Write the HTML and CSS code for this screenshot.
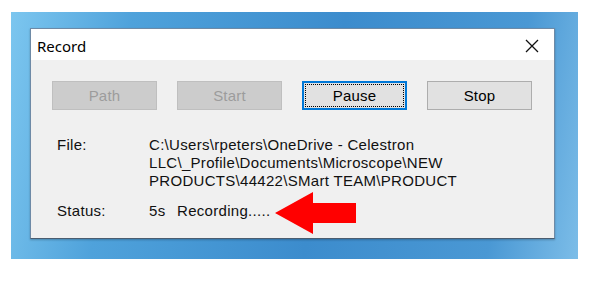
FILE: index.html
```html
<!DOCTYPE html>
<html>
<head>
<meta charset="utf-8">
<link rel="stylesheet" href="styles.css">
</head>
<body>
<div class="wrap">
  <div class="desk">
    <div class="dialog">
      <div class="titlebar">
        <span class="title">Record</span>
        <svg class="close" width="14" height="14" viewBox="0 0 14 14"><path d="M1 1L13 13M13 1L1 13" stroke="#111" stroke-width="1.3" fill="none"/></svg>
      </div>
      <div class="content">
        <div class="buttons">
          <div class="btn disabled">Path</div>
          <div class="btn disabled">Start</div>
          <div class="btn focus"><span class="focusring">Pause</span></div>
          <div class="btn">Stop</div>
        </div>
        <div class="row file-row">
          <div class="label">File:</div>
          <div class="value">
            <span class="line">C:\Users\rpeters\OneDrive - Celestron</span>
            <span class="line">LLC\_Profile\Documents\Microscope\NEW</span>
            <span class="line">PRODUCTS\44422\SMart TEAM\PRODUCT</span>
          </div>
        </div>
        <div class="row status-row">
          <div class="label">Status:</div>
          <div class="value"><span class="secs">5s</span><span>Recording.....</span></div>
        </div>
      </div>
      <svg class="arrow" width="84" height="44" viewBox="0 0 84 44"><polygon points="1,22 39,1 39,12 82,12 82,32 39,32 39,43" fill="#ff0000"/></svg>
    </div>
  </div>
</div>
</body>
</html>
```
FILE: styles.css
```css
html, body { margin: 0; padding: 0; background: #ffffff; }
.wrap { padding: 12px 0 0 11px; }
.desk {
  width: 567px; height: 247px; box-sizing: border-box;
  padding: 16px 0 0 19px;
  background: linear-gradient(100deg, #7cc6ef 0%, #4fa2db 20%, #3c8ccd 55%, #4a98d4 85%, #7cbde8 100%);
}
.dialog {
  position: relative;
  width: 525px; height: 211px; box-sizing: border-box;
  background: #f0f0f0;
  border: 1px solid #6e8aa6;
  border-bottom-color: #4b5d70;
  box-shadow: 0 1px 2px rgba(0,0,0,0.25);
  font-family: "Liberation Sans", Arial, sans-serif;
  color: #000;
}
.titlebar {
  height: 31px; background: #fff;
  display: flex; align-items: center; justify-content: space-between;
  padding: 0 15px 0 6px;
}
.title { font-family: "Noto Sans", "Open Sans", sans-serif; font-size: 15px; color: #000; padding-top: 2px; }
.close { margin-top: 3px; }
.content { padding: 21px 0 0 21px; }
.buttons { display: flex; gap: 20px; }
.btn {
  width: 105px; height: 29px; box-sizing: border-box;
  display: flex; align-items: center; justify-content: center;
  background: #e1e1e1; border: 1px solid #adadad;
  font-size: 15px; letter-spacing: 0.2px; color: #000;
}
.btn.disabled { background: #cccccc; border-color: #bfbfbf; color: #9c9c9c; }
.btn.focus { border: 2px solid #0078d7; padding: 1px; }
.focusring {
  flex: 1; align-self: stretch;
  display: flex; align-items: center; justify-content: center;
  border: 1px dotted #000;
}
.row { display: flex; font-size: 15px; letter-spacing: 0.3px; line-height: 18px; color: #111; }
.file-row { margin-top: 26px; }
.status-row { margin-top: 12px; }
.label { width: 92px; padding-left: 5px; }
.value { display: flex; flex-direction: column; }
.status-row .value { flex-direction: row; }
.line { display: block; white-space: nowrap; }
.secs { width: 28px; }
.arrow { position: absolute; left: 243px; top: 162px; }
```
